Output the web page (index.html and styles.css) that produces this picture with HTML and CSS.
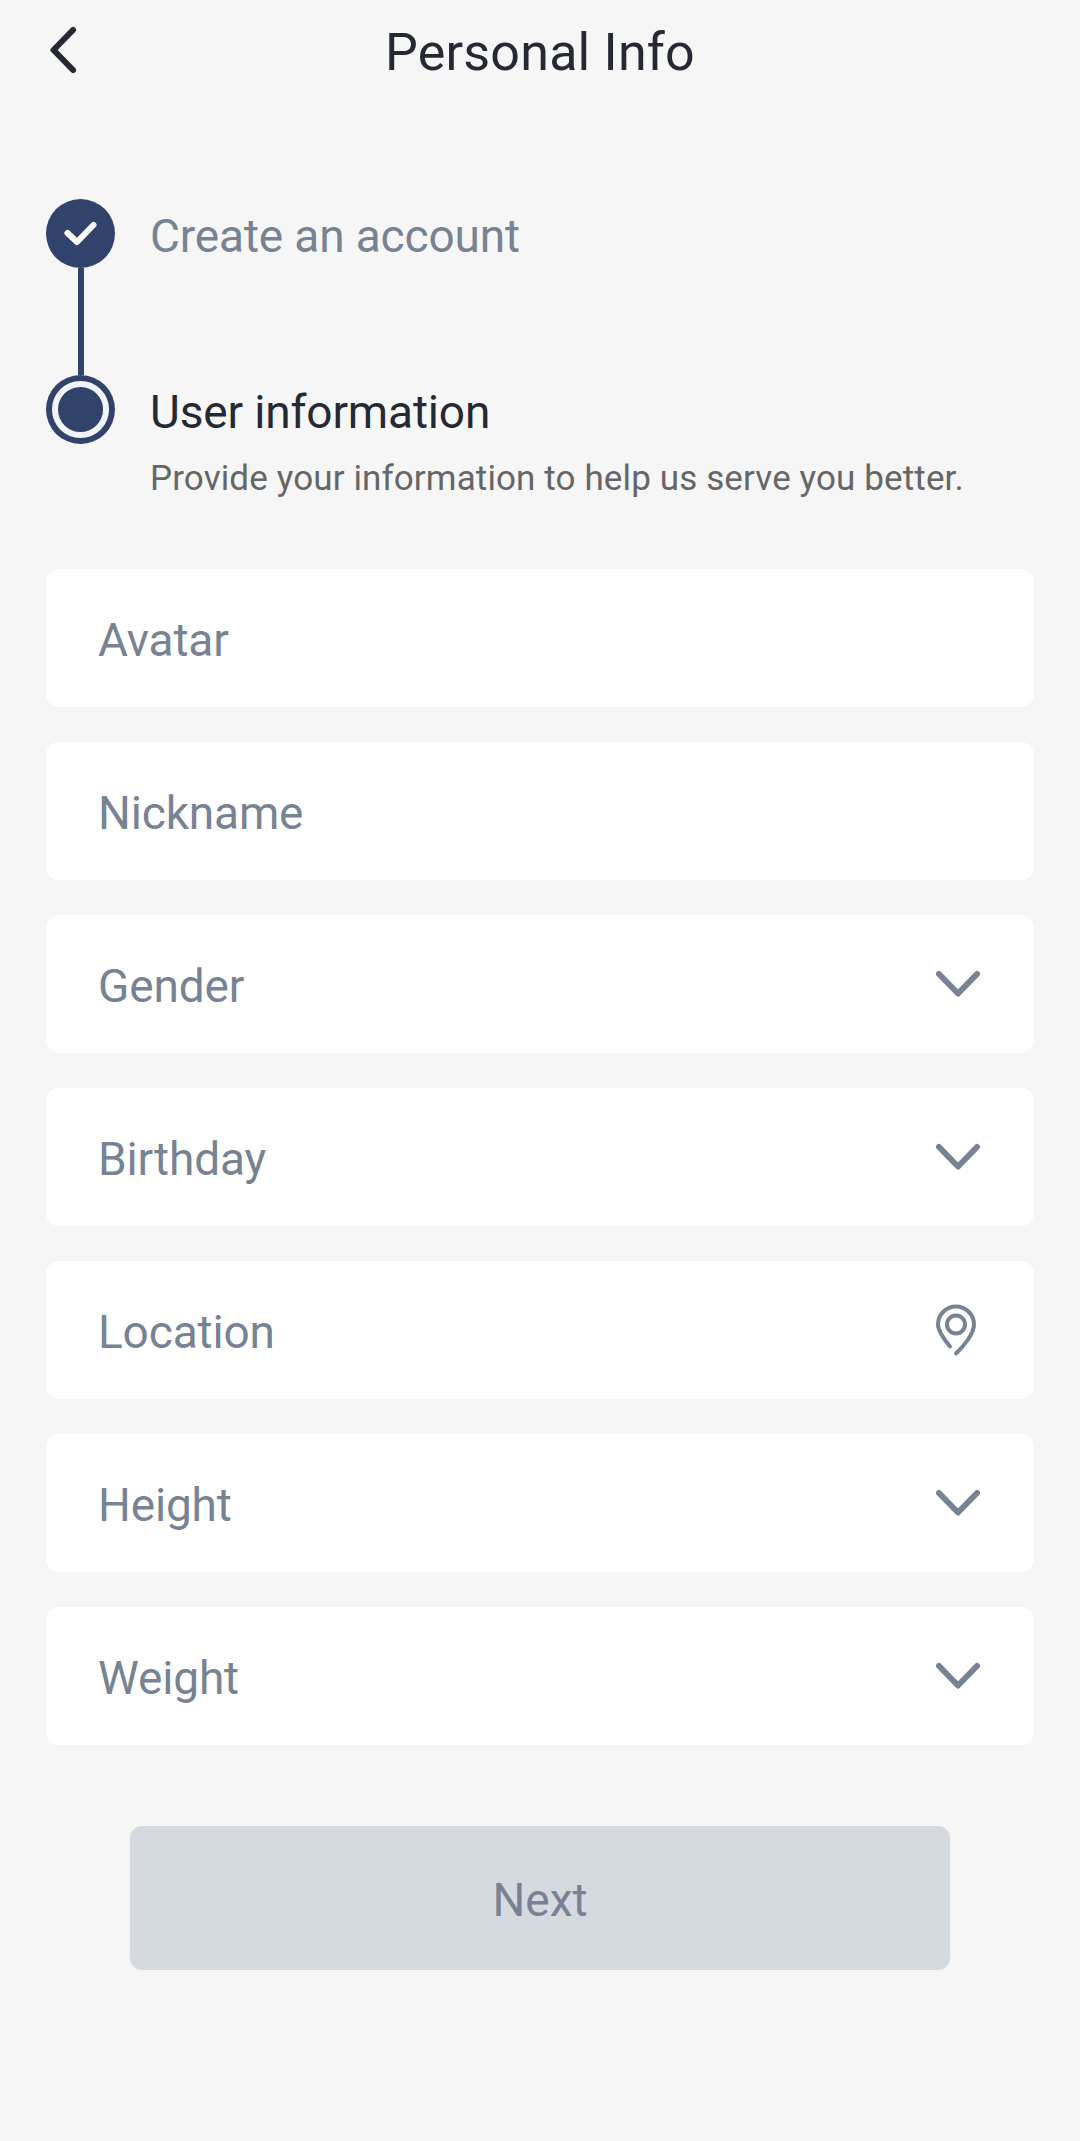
FILE: index.html
```html
<!DOCTYPE html>
<html lang="en">
<head>
    <meta charset="UTF-8">
    <meta name="viewport" content="width=device-width, initial-scale=1.0">
    <title>Personal Info</title>
    <link rel="stylesheet" href="styles.css">
</head>
<body>
    <header class="header">
        <svg class="back" width="40" height="60" viewBox="0 0 40 60">
            <path d="M27 10 L7.500 30 L27 50"/>
        </svg>
        <h1 class="title">Personal Info</h1>
    </header>

    <div class="steps">
        <div class="step">
            <div class="step-mark">
                <div class="circle">
                    <svg width="69" height="69" viewBox="0 0 69 69">
                        <path d="M21.500 34 L31 43 L47.500 26"/>
                    </svg>
                </div>
                <div class="line"></div>
            </div>
            <div class="step-text done">
                <h2>Create an account</h2>
            </div>
        </div>
        <div class="step">
            <div class="step-mark">
                <div class="circle current"><div class="dot"></div></div>
            </div>
            <div class="step-text">
                <h2>User information</h2>
                <p>Provide your information to help us serve you better.</p>
            </div>
        </div>
    </div>

    <div class="form">
        <div class="field"><span>Avatar</span></div>
        <div class="field"><span>Nickname</span></div>
        <div class="field">
            <span>Gender</span>
            <svg class="icon" width="48" height="54" viewBox="0 0 48 54"><path d="M5 17 L24 36.500 L43 17"/></svg>
        </div>
        <div class="field">
            <span>Birthday</span>
            <svg class="icon" width="48" height="54" viewBox="0 0 48 54"><path d="M5 17 L24 36.500 L43 17"/></svg>
        </div>
        <div class="field">
            <span>Location</span>
            <svg class="icon pin" width="48" height="54" viewBox="0 0 48 54">
                <path d="M16 43.500 C9 35 4 28 4 21.500 A18 18 0 0 1 40 21.500 C40 30 31 42 22 50.500"/>
                <circle cx="22" cy="21.500" r="9"/>
            </svg>
        </div>
        <div class="field">
            <span>Height</span>
            <svg class="icon" width="48" height="54" viewBox="0 0 48 54"><path d="M5 17 L24 36.500 L43 17"/></svg>
        </div>
        <div class="field">
            <span>Weight</span>
            <svg class="icon" width="48" height="54" viewBox="0 0 48 54"><path d="M5 17 L24 36.500 L43 17"/></svg>
        </div>
    </div>

    <button class="next">Next</button>
</body>
</html>
```

FILE: styles.css
```css
* {
    box-sizing: border-box;
}
body {
    font-family: Roboto, sans-serif;
    background-color: #f6f6f6;
    margin: 0;
    min-height: 2141px;
}
h1, h2, p {
    margin: 0;
    font-weight: 400;
}
svg {
    display: block;
    fill: none;
    stroke-linecap: round;
    stroke-linejoin: round;
}

.header {
    display: flex;
    align-items: center;
    height: 104px;
    padding: 0 86px 0 46px;
}
.back {
    stroke: #252933;
    stroke-width: 6;
    margin-bottom: 4px;
}
.title {
    flex: 1;
    margin-right: -40px;
    padding-right: 40px;
    text-align: center;
    font-size: 52px;
    letter-spacing: 0.2px;
    color: #252933;
}

.steps {
    padding: 95px 46px 0;
    height: 465px;
}
.step {
    display: flex;
    gap: 35px;
}
.step-mark {
    display: flex;
    flex-direction: column;
    align-items: center;
    width: 69px;
}
.circle {
    width: 69px;
    height: 69px;
    border-radius: 50%;
    background-color: #31426b;
}
.circle svg {
    stroke: white;
    stroke-width: 6;
}
.circle.current {
    padding: 6px;
}
.dot {
    width: 57px;
    height: 57px;
    border: 6px solid #f2f4fb;
    border-radius: 50%;
}
.line {
    width: 6px;
    height: 107px;
    background-color: #31426b;
}
.step-text {
    padding-top: 7px;
}
.step-text h2 {
    font-size: 46px;
    line-height: 60px;
    letter-spacing: -0.15px;
    color: #252933;
}
.step-text.done h2 {
    color: #778392;
}
.step-text p {
    margin-top: 13px;
    font-size: 35px;
    line-height: 48px;
    letter-spacing: 0.12px;
    color: #666666;
}

.form {
    display: flex;
    flex-direction: column;
    gap: 35px;
    padding: 0 46px;
}
.field {
    display: flex;
    align-items: center;
    justify-content: space-between;
    height: 138px;
    padding: 0 52px;
    background: white;
    border-radius: 13px;
    font-size: 46px;
    letter-spacing: -0.15px;
    color: #778392;
}
.field span {
    padding-top: 4px;
}
.icon {
    stroke: #778392;
    stroke-width: 6;
}
.icon.pin {
    stroke-width: 4;
}

.next {
    display: block;
    width: 820px;
    height: 144px;
    margin: 81px auto 0;
    padding: 4px 0 0;
    background-color: #d5dae1;
    border: none;
    border-radius: 12px;
    font-family: inherit;
    font-size: 46px;
    color: #778392;
}
```
